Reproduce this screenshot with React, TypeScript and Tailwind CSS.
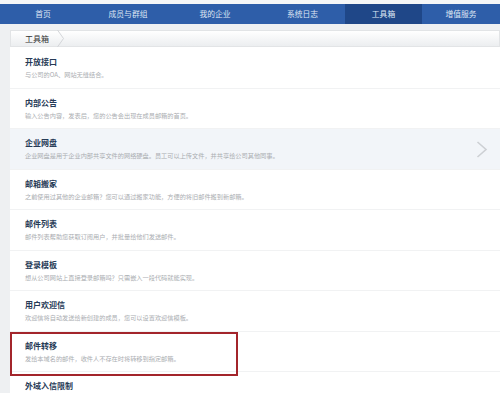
const tabs = [
  { label: "首页", w: "w-[86px]" },
  { label: "成员与群组", w: "w-[84px]" },
  { label: "我的企业", w: "w-[90px]" },
  { label: "系统日志", w: "w-[85px]" },
  { label: "工具箱", w: "w-[77px]", active: true },
  { label: "增值服务", w: "flex-1" },
];

const tools = [
  { title: "开放接口", desc: "与公司的OA、网站无缝结合。" },
  { title: "内部公告", desc: "输入公告内容，发表后，您的公告会出现在成员邮箱的首页。" },
  {
    title: "企业网盘",
    desc: "企业网盘是用于企业内部共享文件的网络硬盘。员工可以上传文件，并共享给公司其他同事。",
    hover: true,
  },
  { title: "邮箱搬家", desc: "之前使用过其他的企业邮箱？您可以通过搬家功能，方便的将旧邮件搬到新邮箱。" },
  { title: "邮件列表", desc: "邮件列表帮助您获取订阅用户，并批量给他们发送邮件。" },
  { title: "登录模板", desc: "想从公司网站上直接登录邮箱吗？只需嵌入一段代码就能实现。" },
  { title: "用户欢迎信", desc: "欢迎信将自动发送给新创建的成员，您可以设置欢迎信模板。" },
  { title: "邮件转移", desc: "发给本域名的邮件，收件人不存在时将转移到指定邮箱。" },
  { title: "外域入信限制", desc: "" },
];

const font = { fontFamily: '"Noto Sans CJK SC", "Noto Sans", sans-serif' };

export default function App() {
  return (
    <div className="w-[500px] h-[393px] overflow-hidden bg-[#eef0f2]" style={font}>
      <div className="h-[4px] bg-[#f5f6f7]" />

      {/* nav */}
      <div className="flex h-[20px] bg-[#2e5ea9]">
        {tabs.map((t) => (
          <div
            key={t.label}
            className={`${t.w} flex items-center justify-center text-[7.8px] leading-none text-[#dfe7f4] ${
              t.active ? "bg-[#1f4788]" : ""
            }`}
          >
            {t.label}
          </div>
        ))}
      </div>

      <div className="h-[6px]" />

      <div className="flex">
        <div className="w-[10px] shrink-0" />
        <div className="relative flex-1 bg-white">
          {/* breadcrumb */}
          <div className="relative flex h-[17px] items-center border border-[#e2e4e6] bg-gradient-to-b from-white to-[#eceef0] pl-[14px]">
            <span className="text-[8px] leading-none text-[#333]">工具箱</span>
            <svg className="absolute left-[46px] top-[-1px]" width="8" height="17" viewBox="0 0 8 17">
              <polyline points="0.5,0 6.5,8.5 0.5,17" fill="none" stroke="#d3d5d8" strokeWidth="1" />
            </svg>
          </div>

          <div className="h-[1px]" />

          {tools.map((t) => (
            <div
              key={t.title}
              className={`relative h-[40.5px] border-b border-[#f1f2f3] pl-[15px] pt-[9px] ${
                t.hover ? "bg-[#f2f5f9]" : ""
              }`}
            >
              <div className="text-[8px] font-bold leading-[10px] text-[#263a56]">{t.title}</div>
              {t.desc && (
                <div className="mt-[4px] whitespace-nowrap text-[6.2px] leading-[8px] text-[#aaadb1]">{t.desc}</div>
              )}
              {t.hover && (
                <svg className="absolute right-[12px] top-[12px]" width="12" height="17" viewBox="0 0 12 17">
                  <polyline points="1.5,1 10,8.5 1.5,16" fill="none" stroke="#cdd0d4" strokeWidth="1.6" />
                </svg>
              )}
            </div>
          ))}

          {/* annotation box */}
          <div className="pointer-events-none absolute left-0 top-[302px] h-[44px] w-[228px] border-2 border-[#a3252b]" />
        </div>
      </div>
    </div>
  );
}
